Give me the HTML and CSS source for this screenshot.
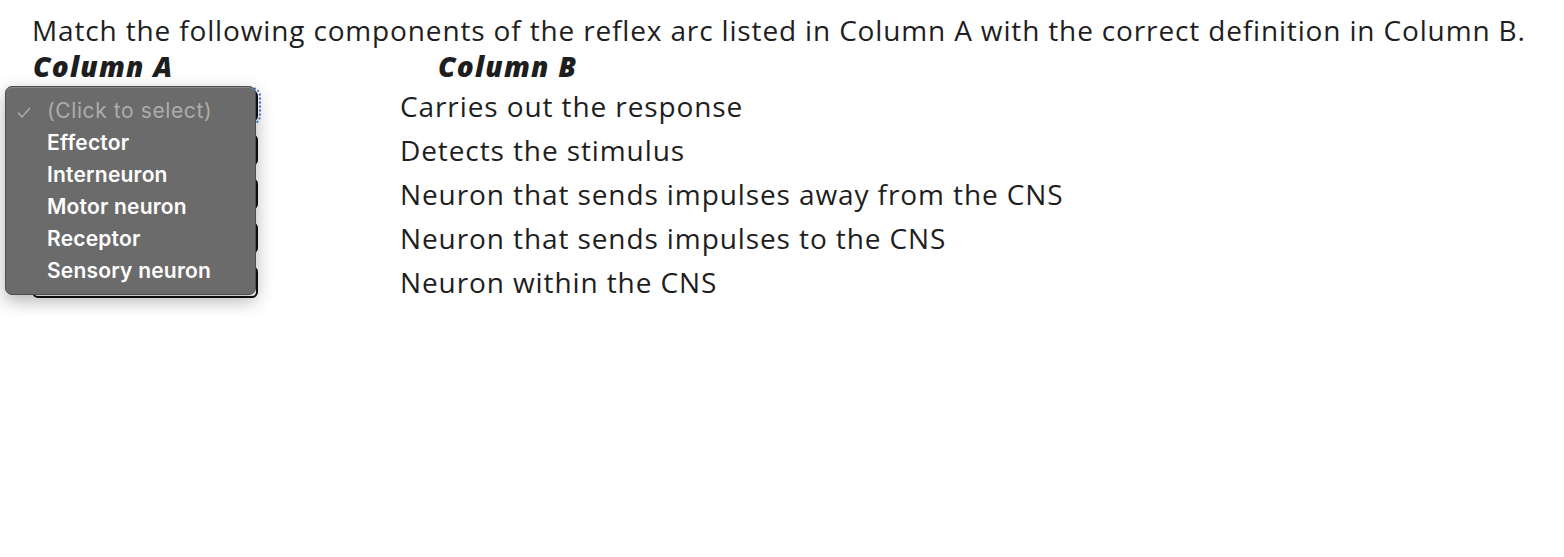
FILE: index.html
```html
<!DOCTYPE html>
<html lang="en">
<head>
  <meta charset="UTF-8" />
  <title>Reflex Arc Matching</title>
  <link rel="stylesheet" href="styles.css">
</head>
<body>

  <div class="question">
    <p class="prompt">Match the following components of the reflex arc listed in Column A with the correct definition in Column B.</p>

    <div class="match">
      <div class="head head-a">Column A</div>
      <div class="head head-b">Column B</div>

      <div class="pick"><div class="select focused"></div></div>
      <div class="def">Carries out the response</div>

      <div class="pick"><div class="select"></div></div>
      <div class="def">Detects the stimulus</div>

      <div class="pick"><div class="select"></div></div>
      <div class="def">Neuron that sends impulses away from the CNS</div>

      <div class="pick"><div class="select"></div></div>
      <div class="def">Neuron that sends impulses to the CNS</div>

      <div class="pick"><div class="select"></div></div>
      <div class="def">Neuron within the CNS</div>
    </div>

    <!-- open dropdown of the first select -->
    <ul class="menu">
      <li class="placeholder">
        <svg class="check" width="14" height="11" viewBox="0 0 14 11"><polyline points="1,5.5 5,10 13,0.8" fill="none" stroke="currentColor" stroke-width="1.4"/></svg>
        (Click to select)
      </li>
      <li>Effector</li>
      <li>Interneuron</li>
      <li>Motor neuron</li>
      <li>Receptor</li>
      <li>Sensory neuron</li>
    </ul>
  </div>

</body>
</html>
```

FILE: styles.css
```css
body {
  margin: 0;
  background: #fff;
  color: #1e1e1e;
  font-family: "Open Sans", "Lato", sans-serif;
}

.question {
  position: relative;
  padding: 12px 32px;
}

.prompt {
  margin: 0;
  font-size: 28px;
  line-height: 36px;
  letter-spacing: 0.85px;
}

.match {
  display: grid;
  grid-template-columns: 368px auto;
  grid-template-rows: 36px repeat(5, 44px);
  align-items: center;
}

.head {
  font-weight: 800;
  font-style: italic;
  font-size: 28px;
  line-height: 36px;
  letter-spacing: 1.2px;
}

.head-a {
  padding-left: 1px;
}

.head-b {
  padding-left: 38px;
}

.def {
  font-size: 28px;
  letter-spacing: 0.9px;
}

.select {
  width: 222px;
  height: 28px;
  border: 2px solid #111;
  border-radius: 6px;
  background: #fff;
}

.select.focused {
  outline: 2px dotted #3b7fd4;
  outline-offset: 1px;
}

.menu {
  position: absolute;
  top: 86px;
  left: 5px;
  width: 251px;
  height: 209px;
  margin: 0;
  padding: 8px 0 0;
  box-sizing: border-box;
  list-style: none;
  background: #6b6b6b;
  border: 1px solid #4e4e4e;
  border-radius: 7px;
  box-shadow: inset 0 1px 0 #8a8a8a, 0 6px 18px rgba(0, 0, 0, 0.3);
  font-family: "Inter", "Roboto", sans-serif;
  font-weight: 600;
  font-size: 21px;
  letter-spacing: 0.2px;
  color: #fff;
}

.menu li {
  height: 32px;
  line-height: 32px;
  padding-left: 41px;
  position: relative;
}

.menu .placeholder {
  color: #acacac;
  font-weight: 400;
  letter-spacing: 0.6px;
}

.menu .check {
  position: absolute;
  left: 11px;
  top: 12px;
}
```
